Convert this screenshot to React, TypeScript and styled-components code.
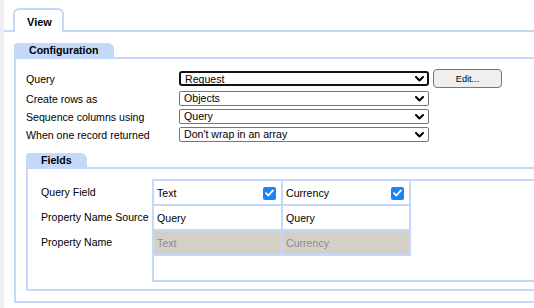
import React from "react";
import styled, { createGlobalStyle } from "styled-components";

const BLUE = "#c4d8f9";

const Global = createGlobalStyle`
  html, body {
    margin: 0;
    padding: 0;
    background: #ffffff;
    overflow: hidden;
  }
  body {
    font-family: "Liberation Sans", Arial, sans-serif;
    font-size: 10.6px;
    color: #000;
  }
  * { box-sizing: border-box; }
`;

const Page = styled.div`
  display: flex;
  width: 534px;
  height: 308px;
  overflow: hidden;
`;

const SideStrip = styled.div`
  flex: 0 0 4px;
  background: #efefef;
`;

const Main = styled.div`
  flex: 1;
  min-width: 0;
  overflow: hidden;
`;

const TabBar = styled.div`
  display: flex;
  align-items: flex-end;
  height: 32px;
  padding-left: 9px;
  border-bottom: 2px solid ${BLUE};
  width: 640px;
`;

const Tab = styled.div`
  display: flex;
  align-items: center;
  width: 51px;
  height: 24px;
  margin-bottom: -2px;
  padding: 1px 0 0 12px;
  background: #fff;
  border: 2px solid ${BLUE};
  border-bottom: 0;
  border-radius: 6px 6px 0 0;
  font-weight: bold;
  font-size: 11px;
`;

const Content = styled.div`
  padding: 11px 0 0 10px;
  width: 640px;
`;

const Section = styled.section<{ $mt?: number }>`
  display: flex;
  flex-direction: column;
  align-items: flex-start;
  margin-top: ${(p) => p.$mt ?? 0}px;
`;

const Legend = styled.div<{ $w: number }>`
  width: ${(p) => p.$w}px;
  height: 14px;
  padding-left: 15px;
  display: flex;
  align-items: center;
  background: ${BLUE};
  border-radius: 3px 6px 0 0;
  font-weight: bold;
  font-size: 10.6px;
`;

const ConfigPanel = styled.div`
  width: 590px;
  border: 2px solid ${BLUE};
  padding: 10px 0 10px 10px;
`;

const FieldsPanel = styled.div`
  align-self: stretch;
  border: 2px solid ${BLUE};
  padding: 10px 0 7px 13px;
`;

const FormGrid = styled.div`
  display: grid;
  grid-template-columns: 153px 250px auto;
  row-gap: 3px;
  align-items: center;
`;

const Label = styled.div`
  white-space: nowrap;
`;

const SelectWrap = styled.div`
  position: relative;
  display: flex;
  width: 250px;
`;

const NativeSelect = styled.select<{ $focused?: boolean }>`
  appearance: none;
  -webkit-appearance: none;
  width: 100%;
  height: 15px;
  margin: 0;
  padding: 0 16px 0 4px;
  font-family: "Liberation Sans", Arial, sans-serif;
  font-size: 10.6px;
  line-height: 13px;
  color: #000;
  background: #fff;
  border: ${(p) => (p.$focused ? "2px solid #111" : "1px solid #767676")};
  border-radius: ${(p) => (p.$focused ? 3 : 2)}px;
  outline: none;
`;

const Chevron = styled.svg`
  position: absolute;
  right: 5px;
  top: 5px;
  pointer-events: none;
`;

const EditButton = styled.button`
  justify-self: start;
  width: 69px;
  height: 19px;
  margin-left: 4px;
  padding: 0;
  background: #efefef;
  border: 1px solid #767676;
  border-radius: 4px;
  font-family: "Liberation Sans", Arial, sans-serif;
  font-size: 9.2px;
  color: #000;
`;

const FieldsBody = styled.div`
  display: flex;
  align-items: flex-start;
`;

const FieldLabels = styled.div`
  flex: 0 0 111px;
  display: flex;
  flex-direction: column;
  padding-top: 1px;
`;

const FieldLabel = styled.div`
  height: 25px;
  line-height: 25px;
  white-space: nowrap;
`;

const GridBox = styled.div`
  flex: 1;
  height: 103px;
  border: 2px solid ${BLUE};
`;

const Table = styled.div`
  display: grid;
  grid-template-columns: 129px 128px;
  grid-auto-rows: 25px;
  width: max-content;
`;

const Cell = styled.div<{ $disabled?: boolean }>`
  display: flex;
  align-items: center;
  justify-content: space-between;
  padding: 0 5px 0 3px;
  border-right: 2px solid ${BLUE};
  border-bottom: 2px solid ${BLUE};
  background: ${(p) => (p.$disabled ? "#d4d0c8" : "#fff")};
  color: ${(p) => (p.$disabled ? "#8c8c8c" : "#000")};
  white-space: nowrap;
`;

const CheckBox = styled.span`
  display: inline-flex;
  align-items: center;
  justify-content: center;
  width: 13px;
  height: 13px;
  border-radius: 2px;
  background: #1a84f5;
  margin-top: 1px;
`;

function Select({ value, focused }: { value: string; focused?: boolean }) {
  return (
    <SelectWrap>
      <NativeSelect $focused={focused} defaultValue={value}>
        <option>{value}</option>
      </NativeSelect>
      <Chevron width="9" height="6" viewBox="0 0 9 6">
        <path d="M1 1 L4.5 4.5 L8 1" fill="none" stroke="#000" strokeWidth="2" strokeLinecap="round" strokeLinejoin="round" />
      </Chevron>
    </SelectWrap>
  );
}

function Check() {
  return (
    <CheckBox>
      <svg width="9" height="8" viewBox="0 0 9 8">
        <path d="M1 4.2 L3.4 6.5 L8 1.3" fill="none" stroke="#fff" strokeWidth="1.8" strokeLinecap="round" strokeLinejoin="round" />
      </svg>
    </CheckBox>
  );
}

const rows = [
  { label: "Create rows as", value: "Objects" },
  { label: "Sequence columns using", value: "Query" },
  { label: "When one record returned", value: "Don't wrap in an array" },
];

const fields = [
  { text: "Text", source: "Query" },
  { text: "Currency", source: "Query" },
];

export default function App() {
  return (
    <>
      <Global />
      <Page>
        <SideStrip />
        <Main>
          <TabBar>
            <Tab>View</Tab>
          </TabBar>
          <Content>
            <Section>
              <Legend $w={100}>Configuration</Legend>
              <ConfigPanel>
                <FormGrid>
                  <Label>Query</Label>
                  <Select value="Request" focused />
                  <EditButton>Edit...</EditButton>
                  {rows.map((r) => (
                    <React.Fragment key={r.label}>
                      <Label>{r.label}</Label>
                      <Select value={r.value} />
                      <span />
                    </React.Fragment>
                  ))}
                </FormGrid>
                <Section $mt={11}>
                  <Legend $w={61}>Fields</Legend>
                  <FieldsPanel>
                    <FieldsBody>
                      <FieldLabels>
                        <FieldLabel>Query Field</FieldLabel>
                        <FieldLabel>Property Name Source</FieldLabel>
                        <FieldLabel>Property Name</FieldLabel>
                      </FieldLabels>
                      <GridBox>
                        <Table>
                          {fields.map((f) => (
                            <Cell key={"q" + f.text}>
                              {f.text}
                              <Check />
                            </Cell>
                          ))}
                          {fields.map((f) => (
                            <Cell key={"s" + f.text}>{f.source}</Cell>
                          ))}
                          {fields.map((f) => (
                            <Cell key={"n" + f.text} $disabled>
                              {f.text}
                            </Cell>
                          ))}
                        </Table>
                      </GridBox>
                    </FieldsBody>
                  </FieldsPanel>
                </Section>
              </ConfigPanel>
            </Section>
          </Content>
        </Main>
      </Page>
    </>
  );
}
